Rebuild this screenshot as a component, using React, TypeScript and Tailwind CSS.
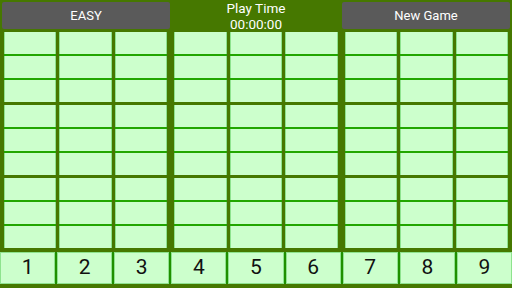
import React from 'react'

const groups = [0, 1, 2]
const blocks = [0, 1, 2]
const cols = [0, 1, 2]
const rows = [0, 1, 2]
const digits = [1, 2, 3, 4, 5, 6, 7, 8, 9]

export default function App() {
  return (
    <div
      className="flex h-[288px] w-[512px] flex-col overflow-hidden bg-[#467800]"
      style={{ fontFamily: 'Roboto, "Liberation Sans", sans-serif' }}
    >
      {/* top bar: buttons 27px tall, timer spans the whole strip */}
      <div className="flex h-[32px] items-start gap-[2px] px-[2px]">
        <button className="mt-[2px] flex h-[27px] flex-1 items-center justify-center rounded-[2px] bg-[#5a5a5a] text-[13px] text-white">
          EASY
        </button>
        <div className="flex h-[32px] flex-1 flex-col items-center justify-center text-[13.5px] leading-[16px] text-white">
          <span>Play Time</span>
          <span>00:00:00</span>
        </div>
        <button className="mt-[2px] flex h-[27px] flex-1 items-center justify-center rounded-[2px] bg-[#5a5a5a] text-[13px] text-white">
          New Game
        </button>
      </div>

      {/* board */}
      <div className="flex h-[216px] flex-col gap-[3px] px-[4px]">
        {groups.map((g) => (
          <div key={g} className="flex h-[70px] gap-[7px]">
            {blocks.map((b) => (
              <div key={b} className="flex flex-1 gap-[3px]">
                {cols.map((c) => (
                  <div key={c} className="flex flex-1 flex-col gap-[2px] bg-[#22a600]">
                    {rows.map((r) => (
                      <div
                        key={r}
                        className="h-[22px] border-x border-[#8ee38e] bg-[#ccffcc]"
                      />
                    ))}
                  </div>
                ))}
              </div>
            ))}
          </div>
        ))}
      </div>

      {/* number pad */}
      <div className="mt-[4px] flex h-[32px] gap-[2px] bg-[#1f9000]">
        {digits.map((d) => (
          <button
            key={d}
            className="flex flex-1 items-center justify-center border border-[#8ee38e] bg-[#ccffcc] text-[21px] text-[#111]"
          >
            {d}
          </button>
        ))}
      </div>
    </div>
  )
}
